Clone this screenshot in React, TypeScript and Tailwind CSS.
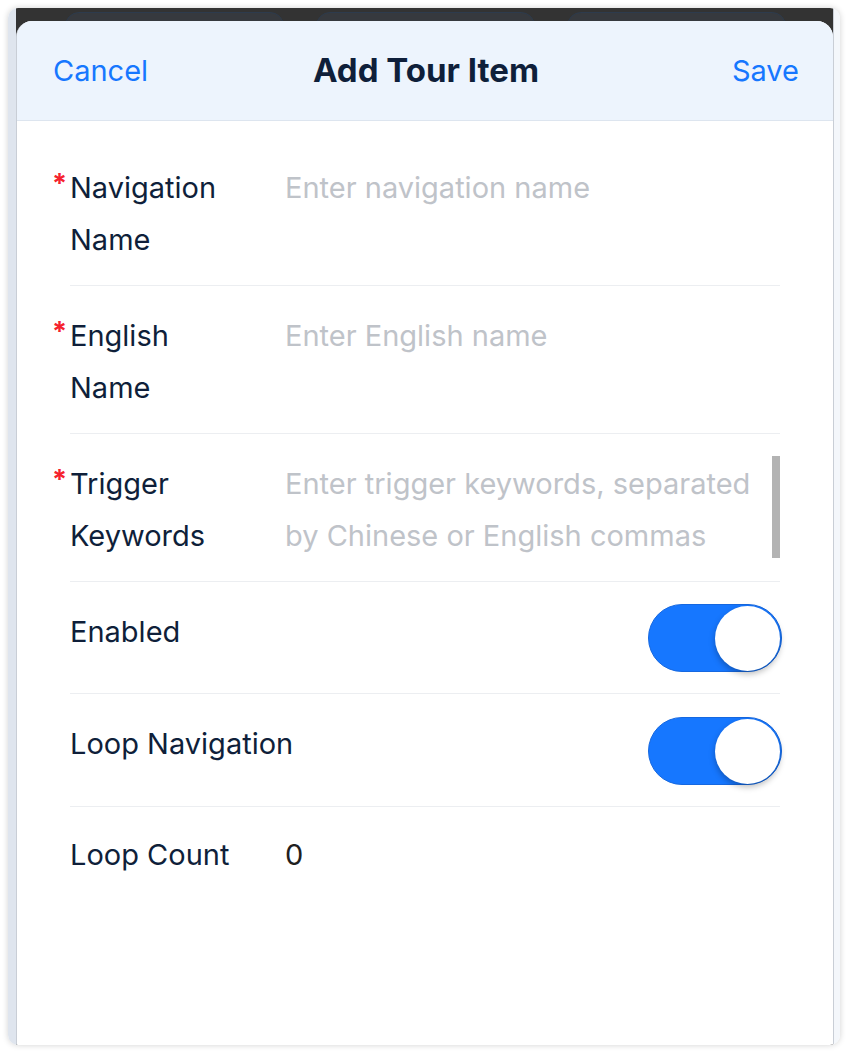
import React from "react";

const font = { fontFamily: "Inter, 'Noto Sans', sans-serif" };

function Toggle() {
  return (
    <div className="mr-[-2px] flex h-[68px] w-[134px] items-center justify-end rounded-full border border-[#1668e0] bg-[#1677ff] p-[1px]">
      <div className="h-[65px] w-[65px] rounded-full bg-white shadow-[0_3px_6px_rgba(0,0,0,0.28)]" />
    </div>
  );
}

function Label({ lines, required }: { lines: string[]; required?: boolean }) {
  return (
    <div className="relative w-[215px] shrink-0 whitespace-nowrap text-[29px] leading-[52px] text-[#0f1f3a]">
      {required && (
        <span className="absolute left-[-18px] top-[-4px] text-[27px] font-bold text-[#f5222d]">*</span>
      )}
      {lines.map((l) => (
        <div key={l}>{l}</div>
      ))}
    </div>
  );
}

export default function App() {
  return (
    <div className="min-h-screen bg-white p-2" style={font}>
      <div className="flex h-[1037px] overflow-hidden rounded-[10px] shadow-[0_0_6px_rgba(0,0,0,0.18)]">
        {/* left strip */}
        <div className="w-[8px] shrink-0 bg-[#dfe5ee]" />

        <div className="flex min-w-0 flex-1 flex-col bg-[#333333]">
          {/* background page peeking above the sheet */}
          <div className="flex h-[13px] shrink-0 gap-[32px] overflow-hidden pl-[49px] pt-[4px]">
            <div className="h-[30px] w-[219px] rounded-[14px] border border-[#2d3b4d] bg-[#36393e]" />
            <div className="h-[30px] w-[219px] rounded-[14px] border border-[#2d3b4d] bg-[#36393e]" />
            <div className="h-[30px] w-[219px] rounded-[14px] border border-[#2d3b4d] bg-[#36393e]" />
          </div>

          {/* sheet */}
          <div className="flex flex-1 flex-col overflow-hidden rounded-t-[16px] border-l border-[#c9ced6] bg-white">
            <div className="grid h-[100px] shrink-0 grid-cols-[1fr_auto_1fr] items-center border-b border-[#dde5ef] bg-[#edf4fd] pl-[36px] pr-[34px]">
              <span className="justify-self-start text-[29px] text-[#1677ff]">Cancel</span>
              <span className="text-[33px] font-bold text-[#0f1f3a]">Add Tour Item</span>
              <span className="justify-self-end text-[29px] text-[#1677ff]">Save</span>
            </div>

            <div className="flex flex-col px-[53px] pt-[17px]">
              <div className="flex border-b border-[#eceef1] pb-[19px] pt-[24px]">
                <Label lines={["Navigation", "Name"]} required />
                <div className="flex-1 text-[29px] leading-[52px] text-[#bfc3c9]">Enter navigation name</div>
              </div>

              <div className="flex border-b border-[#eceef1] pb-[19px] pt-[24px]">
                <Label lines={["English", "Name"]} required />
                <div className="flex-1 text-[29px] leading-[52px] text-[#bfc3c9]">Enter English name</div>
              </div>

              <div className="flex border-b border-[#eceef1] pb-[19px] pt-[24px]">
                <Label lines={["Trigger", "Keywords"]} required />
                <div className="flex flex-1 items-start">
                  <div className="flex-1 text-[29px] leading-[52px] text-[#bfc3c9]">
                    Enter trigger keywords, separated by Chinese or English commas
                  </div>
                  <div className="mt-[-2px] h-[102px] w-[8px] shrink-0 bg-[#b3b3b3]" />
                </div>
              </div>

              <div className="flex items-start justify-between border-b border-[#eceef1] pb-[21px] pt-[22px]">
                <div className="mt-[2px]">
                  <Label lines={["Enabled"]} />
                </div>
                <Toggle />
              </div>

              <div className="flex items-start justify-between border-b border-[#eceef1] pb-[21px] pt-[23px]">
                <div className="mt-[1px]">
                  <Label lines={["Loop Navigation"]} />
                </div>
                <Toggle />
              </div>

              <div className="flex pt-[22px]">
                <Label lines={["Loop Count"]} />
                <div className="text-[29px] leading-[52px] text-[#1f1f1f]">0</div>
              </div>
            </div>
          </div>
        </div>

        {/* right strip */}
        <div className="w-[7px] shrink-0 border-l border-[#c9ced6] bg-[#f4f7fb]" />
      </div>
    </div>
  );
}
